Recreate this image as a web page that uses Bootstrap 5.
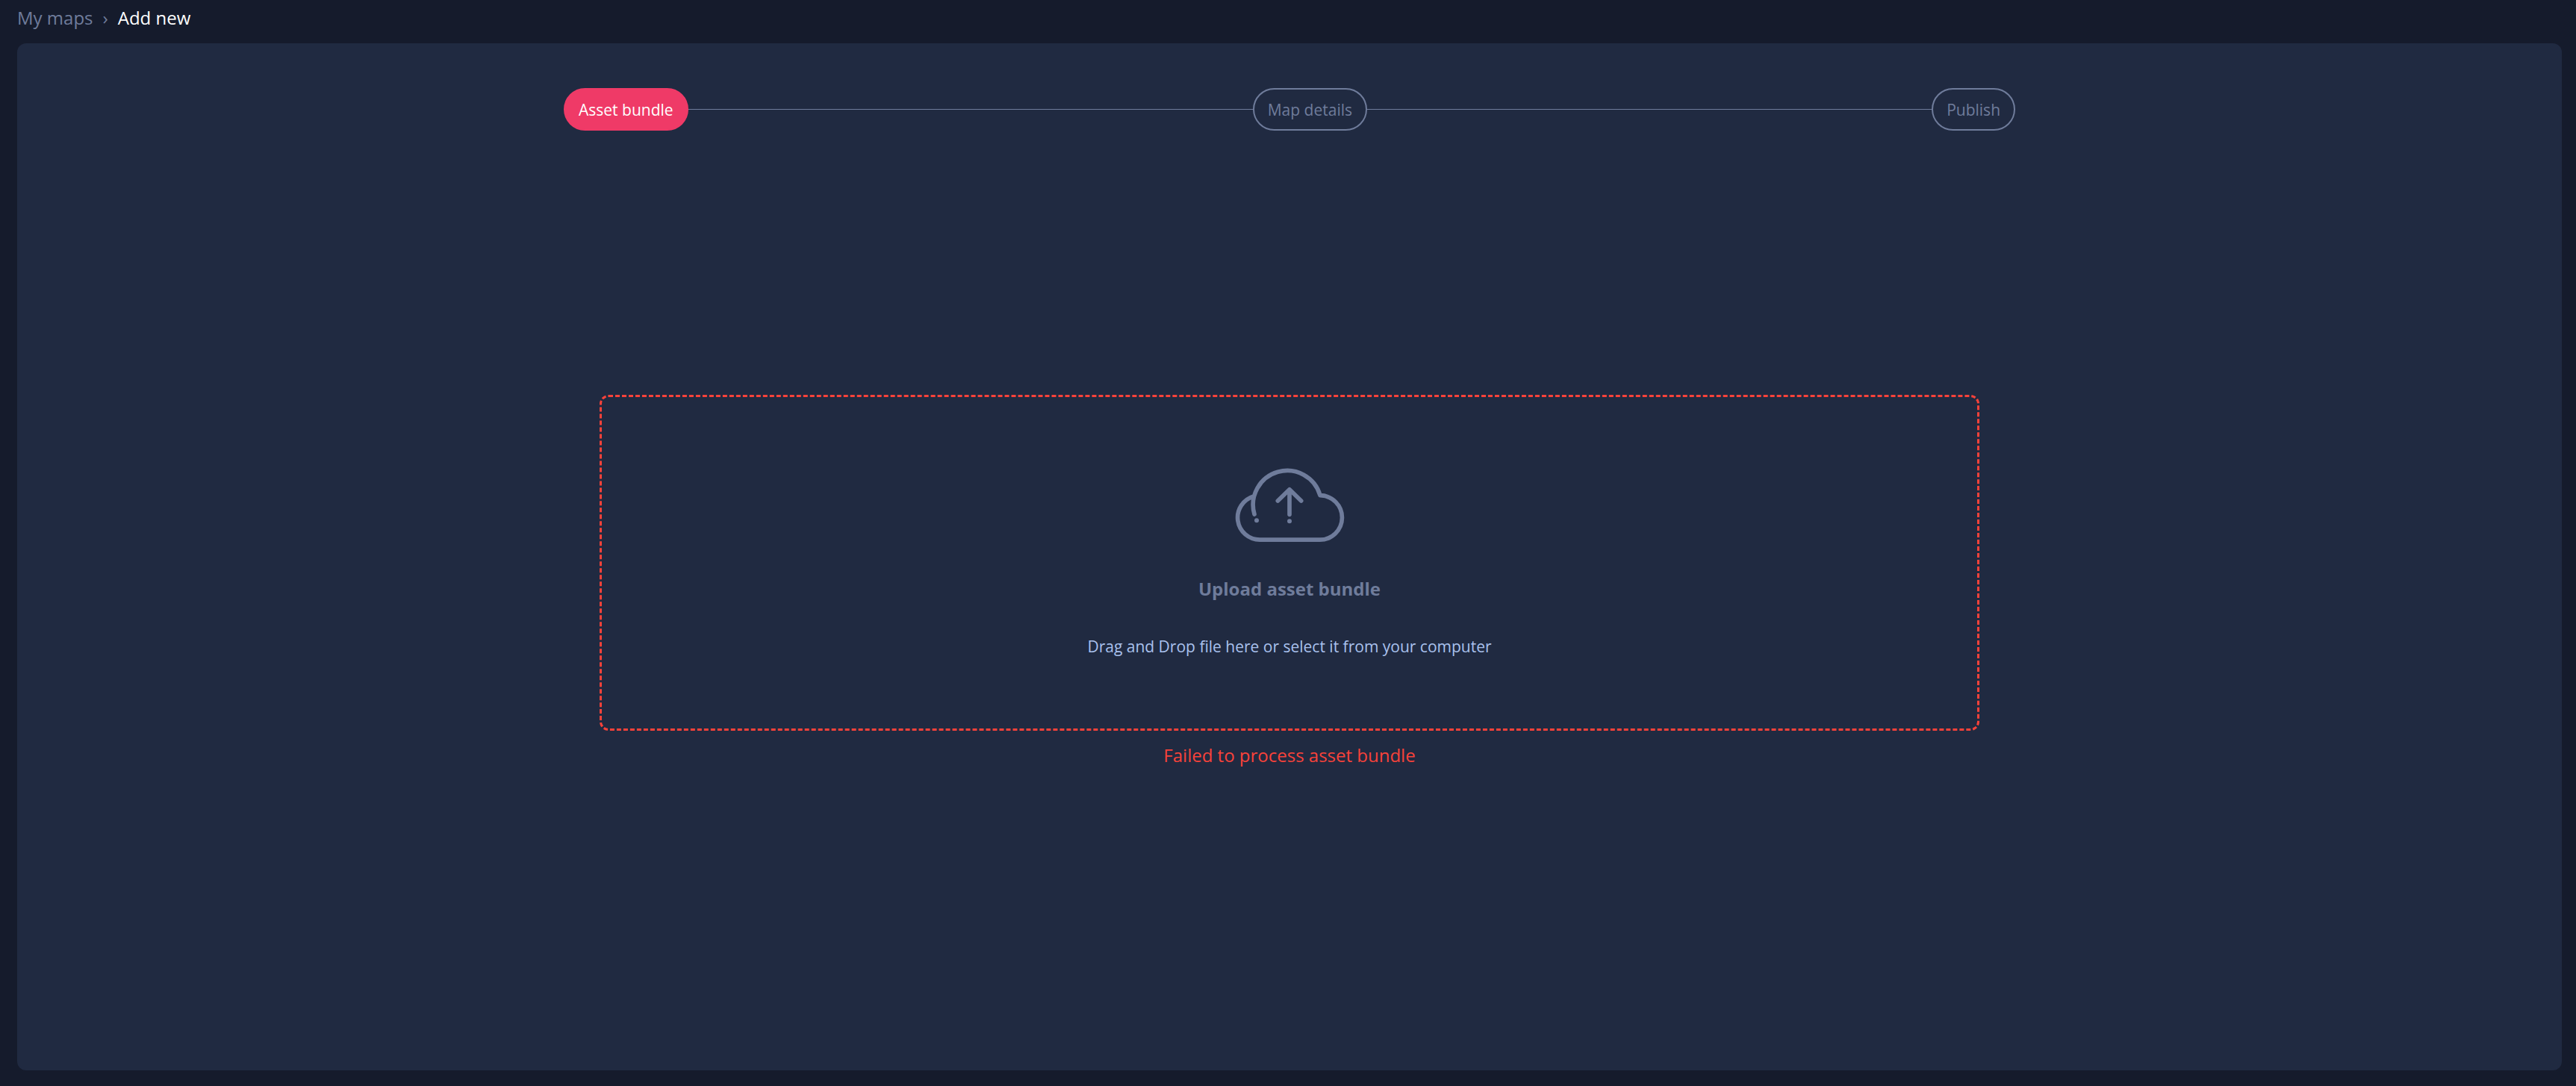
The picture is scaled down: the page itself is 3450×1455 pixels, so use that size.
<!DOCTYPE html>
<html lang="en">
<head>
<meta charset="utf-8">
<meta name="viewport" content="width=device-width, initial-scale=1">
<title>My maps - Add new</title>
<link href="https://cdn.jsdelivr.net/npm/bootstrap@5.3.0/dist/css/bootstrap.min.css" rel="stylesheet">
<style>
  body { background: #151b2c; color: #fff; font-family: "Open Sans", "Noto Sans", sans-serif; font-size: 24px; line-height: 32px; padding: 8px 19px 21px 23px; }
  .muted, .crumbs .breadcrumb-item::before { color: #6f7c9b; }
  .crumbs { --bs-breadcrumb-divider: "›"; --bs-breadcrumb-item-padding-x: 13px; --bs-breadcrumb-font-size: 24px; --bs-breadcrumb-margin-bottom: 18px; }
  .panel { background: #202a41; border-radius: 12px; padding-top: 60px; }
  .steps { max-width: 1944px; }
  .step { height: 57px; padding: 0 18px; border: 2px solid #6f7c9b; background: transparent; color: #6f7c9b; font-size: 21px; }
  .step.current { background: #ef3a67; border-color: #ef3a67; color: #fff; }
  .rail { height: 1px; background: #6f7c9b; }
  .upload { max-width: 1848px; padding-bottom: 52px; }
  .dropzone { height: 450px; border: 3px dashed #f8423a; border-radius: 12px; cursor: pointer; padding-top: 96px; }
  .cloud { width: 144px; height: 98px; }
  .zone-title { margin-top: 47px; font-weight: 700; }
  .zone-hint { margin-top: 45px; font-size: 21px; color: #a9c1ed; }
  .failure { margin-top: 17px; color: #f8423a; }
</style>
<script src="https://cdn.jsdelivr.net/npm/bootstrap@5.3.0/dist/js/bootstrap.bundle.min.js" defer></script>
</head>
<body class="d-flex flex-column min-vh-100">
  <nav aria-label="Breadcrumb">
    <ol class="breadcrumb crumbs">
      <li class="breadcrumb-item"><a href="#" class="muted text-decoration-none">My maps</a></li>
      <li class="breadcrumb-item text-white" aria-current="page">Add new</li>
    </ol>
  </nav>
  <main class="panel d-flex flex-column align-items-center flex-grow-1">
    <div class="steps d-flex align-items-center w-100">
      <button type="button" class="step current rounded-pill" aria-current="step">Asset bundle</button>
      <div class="rail flex-grow-1"></div>
      <button type="button" class="step rounded-pill">Map details</button>
      <div class="rail flex-grow-1"></div>
      <button type="button" class="step rounded-pill">Publish</button>
    </div>
    <section class="upload w-100 flex-grow-1 d-flex flex-column justify-content-center text-center">
      <label for="bundle" class="dropzone d-flex flex-column align-items-center">
        <svg class="cloud" viewBox="75 57 432 294" fill="none" stroke="#6f7c9b" stroke-width="17" stroke-linecap="round" stroke-linejoin="round" overflow="visible" aria-hidden="true">
          <path d="M150 240A137 137 0 1 1 414 164A89 89 0 0 1 412 342.500H172A89 89 0 0 1 147 168"/>
          <path d="M291 241V141M244 186L291 140L338 186"/>
          <g fill="#6f7c9b" stroke="none"><circle cx="159" cy="265" r="9"/><circle cx="291" cy="268" r="9"/></g>
        </svg>
        <span class="zone-title muted">Upload asset bundle</span>
        <span class="zone-hint">Drag and Drop file here or select it from your computer</span>
        <input type="file" id="bundle" class="visually-hidden">
      </label>
      <p class="failure mb-0" role="alert">Failed to process asset bundle</p>
    </section>
  </main>
</body>
</html>
